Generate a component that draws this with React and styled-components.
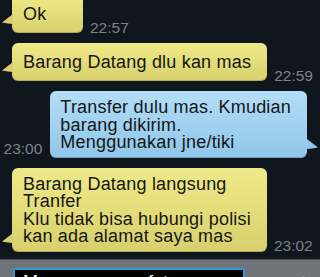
import styled, { createGlobalStyle } from "styled-components";

const GlobalStyle = createGlobalStyle`
  body {
    margin: 0;
    background: #10161e;
    font-family: "Liberation Sans", Arial, sans-serif;
    overflow: hidden;
  }
`;

const messages = [
  { id: 1, mine: false, time: "22:57", text: "Ok" },
  { id: 2, mine: false, time: "22:59", text: "Barang Datang dlu kan mas" },
  {
    id: 3,
    mine: true,
    time: "23:00",
    text: "Transfer dulu mas. Kmudian\nbarang dikirim.\nMenggunakan jne/tiki",
  },
  {
    id: 4,
    mine: false,
    time: "23:02",
    text: "Barang Datang langsung\nTranfer\nKlu tidak bisa hubungi polisi\nkan ada alamat saya mas",
  },
];

const App = () => {
  return (
    <Screen>
      <GlobalStyle />
      <Thread>
        {messages.map((msg) => (
          <Row key={msg.id} $mine={msg.mine}>
            {msg.mine && <Time $mine>{msg.time}</Time>}
            <Bubble $mine={msg.mine}>
              {msg.text}
              {msg.mine ? (
                <Tail $mine viewBox="0 0 11 10">
                  <path d="M0 0 L11 8.5 Q5 9.5 0 10 Z" fill="#8fc6ea" />
                </Tail>
              ) : (
                <Tail viewBox="0 0 11 10">
                  <path d="M11 0 L0 8.5 Q6 9.5 11 10 Z" fill="#d7d06c" />
                </Tail>
              )}
            </Bubble>
            {!msg.mine && <Time>{msg.time}</Time>}
          </Row>
        ))}
      </Thread>
      <Composer>
        <Input>Mau nomor ya, fotonya mas</Input>
        <Counter>160/160</Counter>
      </Composer>
    </Screen>
  );
};

export default App;

const Screen = styled.div`
  width: 320px;
  height: 277px;
  display: flex;
  flex-direction: column;
  overflow: hidden;
`;

const Thread = styled.div`
  display: flex;
  flex-direction: column;
  gap: 10px;
  margin-top: -5px;
  padding-bottom: 7px;
`;

const Row = styled.div`
  display: flex;
  align-items: flex-end;
  gap: ${(p) => (p.$mine ? "8px" : "7px")};
  justify-content: ${(p) => (p.$mine ? "flex-end" : "flex-start")};
  padding: ${(p) => (p.$mine ? "0 13px 0 0" : "0 0 0 12px")};
`;

const Bubble = styled.div`
  position: relative;
  flex-shrink: 0;
  min-width: 71px;
  min-height: 38px;
  box-sizing: border-box;
  display: flex;
  flex-direction: column;
  justify-content: center;
  padding: ${(p) => (p.$mine ? "8px 16px 6px 10px" : "8px 16px 6px 11px")};
  border-radius: 6px;
  font-size: 18px;
  letter-spacing: 0.2px;
  line-height: 17.5px;
  color: #161616;
  white-space: pre;
  background: ${(p) =>
    p.$mine
      ? "linear-gradient(#b3def7, #8fc6ea)"
      : "linear-gradient(#efea88, #d7d06c)"};
  box-shadow: inset 0 -1px 0 rgba(0, 0, 0, 0.18);
`;

const Tail = styled.svg`
  position: absolute;
  bottom: 9px;
  width: 11px;
  height: 10px;
  ${(p) => (p.$mine ? "right: -11px;" : "left: -10px;")}
`;

const Time = styled.span`
  flex-shrink: 0;
  font-size: 15.5px;
  line-height: 1;
  color: #7d8288;
  margin-bottom: ${(p) => (p.$mine ? "1px" : "-2px")};
`;

const Composer = styled.div`
  flex: 1;
  display: flex;
  align-items: flex-start;
  gap: 30px;
  padding: 8px 0 0 13px;
  background: #6f7479;
  border-top: 1px solid #4a4f54;
`;

const Input = styled.div`
  width: 232px;
  height: 40px;
  flex-shrink: 0;
  box-sizing: border-box;
  background: #000;
  border: 2px solid #2f9bd6;
  padding: 2px 8px;
  font-size: 18px;
  color: #fff;
  white-space: nowrap;
  overflow: hidden;
`;

const Counter = styled.span`
  margin-top: 5px;
  font-size: 15px;
  color: #a3a8ad;
  white-space: nowrap;
`;
